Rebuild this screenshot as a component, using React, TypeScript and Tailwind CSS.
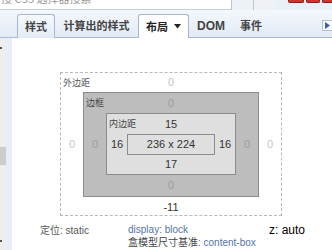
import React from "react";

const cjk = "font-['Noto_Sans_CJK_SC',sans-serif]";

const Tabs: React.FC = () => (
  <div className="h-[28px] flex items-end pl-[17px] bg-linear-to-b from-[#f4f8fc] to-[#e2eaf5] border-b border-[#a9bbd2] relative">
    <div className={`w-[38px] h-[24px] -mb-px flex items-center justify-center border border-b-0 border-[#a6b6cb] rounded-t-[3px] bg-linear-to-b from-[#f6f9fd] to-[#e4ebf4] text-[11px] font-bold text-[#444] ${cjk}`}>
      样式
    </div>
    <div className={`w-[83px] h-[23px] flex items-center justify-center text-[11px] font-bold text-[#444] ${cjk}`}>
      计算出的样式
    </div>
    <div className={`w-[51px] h-[24px] -mb-px flex items-center pl-[7px] gap-[6px] border border-b-0 border-[#a6b6cb] rounded-t-[3px] bg-white text-[11px] font-bold text-[#222] ${cjk}`}>
      <span>布局</span>
      <svg width="7" height="5" viewBox="0 0 7 5">
        <path d="M0 0 H7 L3.5 4.5 Z" fill="#222" />
      </svg>
    </div>
    <div className="w-[51px] h-[23px] flex items-center pl-[8px] text-[12px] font-bold text-[#444] font-['Liberation_Sans',sans-serif]">
      DOM
    </div>
    <div className={`h-[23px] flex items-center text-[11px] font-bold text-[#444] ${cjk}`}>
      事件
    </div>
    <div className="ml-auto self-start mt-[10px] w-[10px] h-[11px] border border-r-0 border-[#b3c1d4] bg-[#f7f9fc] flex items-center justify-center">
      <svg width="5" height="7" viewBox="0 0 5 7">
        <path d="M0 0 L5 3.5 L0 7 Z" fill="#3a5fb0" />
      </svg>
    </div>
  </div>
);

const Zero: React.FC<{ light?: boolean }> = ({ light }) => (
  <span className={light ? "text-[#c4c4c4]" : "text-[#9c9c9c]"}>0</span>
);

const BoxModel: React.FC = () => (
  <div className="w-[222px] border border-dashed border-[#b8b8b8] grid grid-cols-[22px_176px_22px] grid-rows-[19px_105px_18px] text-[11px] font-['Liberation_Sans',sans-serif]">
    <div className="col-span-3 grid grid-cols-[1fr_auto_1fr] items-center">
      <span className={`justify-self-start pl-[2px] text-[9px] text-[#555] ${cjk}`}>外边距</span>
      <Zero light />
      <span />
    </div>
    <div className="flex items-center justify-center">
      <Zero light />
    </div>
    <div className="border border-[#8c8c8c] bg-[#bdbdbd] grid grid-cols-[22px_130px_22px] grid-rows-[20px_62px_21px]">
      <div className="col-span-3 grid grid-cols-[1fr_auto_1fr] items-center">
        <span className={`justify-self-start pl-[2px] text-[9px] text-[#444] ${cjk}`}>边框</span>
        <Zero />
        <span />
      </div>
      <div className="flex items-center justify-center">
        <Zero />
      </div>
      <div className="border border-[#8c8c8c] bg-[#dfdfdf] grid grid-cols-[20px_88px_20px] grid-rows-[20px_21px_19px] text-[#333]">
        <div className="col-span-3 grid grid-cols-[1fr_auto_1fr] items-center">
          <span className={`justify-self-start pl-[2px] text-[9px] text-[#444] ${cjk}`}>内边距</span>
          <span>15</span>
          <span />
        </div>
        <div className="flex items-center justify-center">16</div>
        <div className="border border-[#8c8c8c] bg-[#dfdfdf] flex items-center justify-center">
          236 x 224
        </div>
        <div className="flex items-center justify-center">16</div>
        <div className="col-span-3 flex items-center justify-center">17</div>
      </div>
      <div className="flex items-center justify-center">
        <Zero />
      </div>
      <div className="col-span-3 flex items-center justify-center">
        <Zero />
      </div>
    </div>
    <div className="flex items-center justify-center">
      <Zero light />
    </div>
    <div className="col-span-3 flex items-center justify-center pt-[3px] text-[#333]">-11</div>
  </div>
);

export default function App() {
  return (
    <div className="w-[332px] h-[250px] overflow-hidden bg-white flex flex-col">
      {/* top strip: search box, buttons, window controls */}
      <div className="h-[10px] flex bg-[#e9f0f8]">
        <div className={`w-[232px] bg-white border-b border-[#c3cfde] overflow-hidden text-[11px] leading-[12px] text-[#999] ${cjk}`}>
          <div className="-mt-[8px] pl-[1px]">搜 CSS 选择器搜索</div>
        </div>
        <div className="w-[45px] flex border-l border-[#b9c5d5] bg-[#eef2f7]">
          <div className="w-[22px] border-r border-[#b9c5d5]" />
        </div>
        <div className="flex-1 flex justify-end items-start pr-0 gap-[2px] pl-[12px]">
          <div className="w-[16px] h-[3px] bg-[#d8302c] rounded-b-[2px] border border-t-0 border-[#8d1d1a]" />
          <div className="w-[14px] h-[3px] bg-[#d8302c] rounded-b-[2px] border border-t-0 border-[#8d1d1a]" />
          <div className="w-[10px] h-[3px] bg-[#d8302c] rounded-bl-[2px] border border-t-0 border-r-0 border-[#8d1d1a]" />
        </div>
      </div>

      <Tabs />

      <div className="flex-1 flex">
        {/* left gutter */}
        <div className="w-[6px] bg-[#eeeeee] flex flex-col">
          <div className="mt-[9px] w-[2px] h-[2px] bg-[#555]" />
          <div className="mt-[98px] h-[18px] bg-[#cdcdcd]" />
          <div className="mt-auto mb-[8px] w-[2px] h-[2px] bg-[#555]" />
        </div>
        <div className="w-[6px] bg-[#e6eef9]" />

        {/* layout panel */}
        <div className="flex-1 flex flex-col pt-[34px] pl-[48px]">
          <BoxModel />
          <div className="mt-[8px] -ml-[20px] flex text-[10px] leading-[12px]">
            <div className="w-[88px] text-[#555]">
              <span className={cjk}>定位</span>
              <span className="font-['Liberation_Sans',sans-serif]">: static</span>
            </div>
            <div className="w-[141px] flex flex-col">
              <span className="font-['Liberation_Sans',sans-serif] text-[#5574a6]">display: block</span>
              <span>
                <span className={`text-[#444] ${cjk}`}>盒模型尺寸基准</span>
                <span className="font-['Liberation_Sans',sans-serif] text-[#5574a6]">: content-box</span>
              </span>
            </div>
            <div className="text-[12px] leading-[12px] text-black font-['Liberation_Sans',sans-serif]">z: auto</div>
          </div>
        </div>
      </div>
    </div>
  );
}
